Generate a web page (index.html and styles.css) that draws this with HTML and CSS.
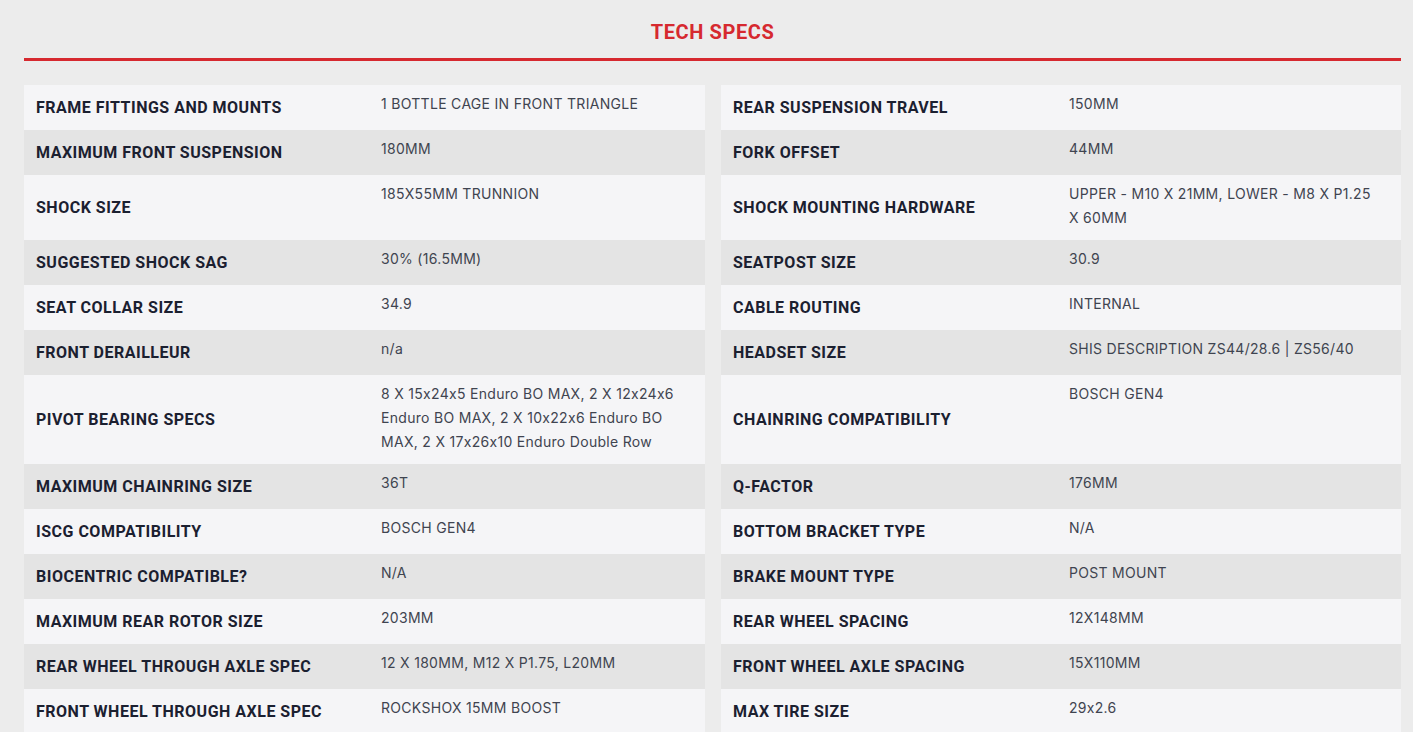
FILE: index.html
```html
<!DOCTYPE html>
<html lang="en">
<head>
<meta charset="utf-8">
<title>Tech Specs</title>
<link rel="stylesheet" href="styles.css">
</head>
<body>
<section class="specs">
  <h2 class="specs-title">TECH SPECS</h2>
  <div class="specs-rule"></div>
  <div class="specs-grid">
    <div class="row"><div class="label">FRAME FITTINGS AND MOUNTS</div><div class="value">1 BOTTLE CAGE IN FRONT TRIANGLE</div></div>
    <div class="row"><div class="label">REAR SUSPENSION TRAVEL</div><div class="value">150MM</div></div>
    <div class="row"><div class="label">MAXIMUM FRONT SUSPENSION</div><div class="value">180MM</div></div>
    <div class="row"><div class="label">FORK OFFSET</div><div class="value">44MM</div></div>
    <div class="row"><div class="label">SHOCK SIZE</div><div class="value">185X55MM TRUNNION</div></div>
    <div class="row"><div class="label">SHOCK MOUNTING HARDWARE</div><div class="value">UPPER - M10 X 21MM, LOWER - M8 X P1.25 X 60MM</div></div>
    <div class="row"><div class="label">SUGGESTED SHOCK SAG</div><div class="value">30% (16.5MM)</div></div>
    <div class="row"><div class="label">SEATPOST SIZE</div><div class="value">30.9</div></div>
    <div class="row"><div class="label">SEAT COLLAR SIZE</div><div class="value">34.9</div></div>
    <div class="row"><div class="label">CABLE ROUTING</div><div class="value">INTERNAL</div></div>
    <div class="row"><div class="label">FRONT DERAILLEUR</div><div class="value">n/a</div></div>
    <div class="row"><div class="label">HEADSET SIZE</div><div class="value">SHIS DESCRIPTION ZS44/28.6 | ZS56/40</div></div>
    <div class="row"><div class="label">PIVOT BEARING SPECS</div><div class="value">8 X 15x24x5 Enduro BO MAX, 2 X 12x24x6 Enduro BO MAX, 2 X 10x22x6 Enduro BO MAX, 2 X 17x26x10 Enduro Double Row</div></div>
    <div class="row"><div class="label">CHAINRING COMPATIBILITY</div><div class="value">BOSCH GEN4</div></div>
    <div class="row"><div class="label">MAXIMUM CHAINRING SIZE</div><div class="value">36T</div></div>
    <div class="row"><div class="label">Q-FACTOR</div><div class="value">176MM</div></div>
    <div class="row"><div class="label">ISCG COMPATIBILITY</div><div class="value">BOSCH GEN4</div></div>
    <div class="row"><div class="label">BOTTOM BRACKET TYPE</div><div class="value">N/A</div></div>
    <div class="row"><div class="label">BIOCENTRIC COMPATIBLE?</div><div class="value">N/A</div></div>
    <div class="row"><div class="label">BRAKE MOUNT TYPE</div><div class="value">POST MOUNT</div></div>
    <div class="row"><div class="label">MAXIMUM REAR ROTOR SIZE</div><div class="value">203MM</div></div>
    <div class="row"><div class="label">REAR WHEEL SPACING</div><div class="value">12X148MM</div></div>
    <div class="row"><div class="label">REAR WHEEL THROUGH AXLE SPEC</div><div class="value">12 X 180MM, M12 X P1.75, L20MM</div></div>
    <div class="row"><div class="label">FRONT WHEEL AXLE SPACING</div><div class="value">15X110MM</div></div>
    <div class="row"><div class="label">FRONT WHEEL THROUGH AXLE SPEC</div><div class="value">ROCKSHOX 15MM BOOST</div></div>
    <div class="row"><div class="label">MAX TIRE SIZE</div><div class="value">29x2.6</div></div>
  </div>
</section>
</body>
</html>
```
FILE: styles.css
```css
* { box-sizing: border-box; }

html, body {
  margin: 0;
  padding: 0;
  background: #ececec;
}

body {
  font-family: Inter, "Liberation Sans", Arial, sans-serif;
  font-feature-settings: "calt" 0;
}

.specs {
  padding: 0 12px 0 24px;
}

.specs-title {
  margin: 0;
  height: 58px;
  padding-top: 19px;
  text-align: center;
  font-family: Roboto, "Liberation Sans", sans-serif;
  font-weight: 700;
  font-size: 20px;
  line-height: 26px;
  letter-spacing: 0.6px;
  color: #d6292f;
}

.specs-rule {
  height: 3px;
  background: #d6292f;
}

.specs-grid {
  margin-top: 24px;
  display: grid;
  grid-template-columns: 681px 680px;
  column-gap: 16px;
}

.row {
  display: grid;
  grid-template-columns: 357px 1fr;
  min-height: 45px;
  background: #f5f5f7;
}

.row:nth-child(even) {
  grid-template-columns: 348px 1fr;
}

.row:nth-child(4n+3),
.row:nth-child(4n+4) {
  background: #e4e4e4;
}

.label {
  align-self: center;
  padding: 0 12px;
  font-family: Roboto, "Liberation Sans", sans-serif;
  font-weight: 700;
  font-size: 16px;
  letter-spacing: 0.5px;
  color: #1b2030;
}

.value {
  padding: 7px 20px 10px 0;
  font-size: 14px;
  line-height: 24px;
  letter-spacing: 0.3px;
  color: #3f4450;
  font-feature-settings: "calt" 0;
}
```
